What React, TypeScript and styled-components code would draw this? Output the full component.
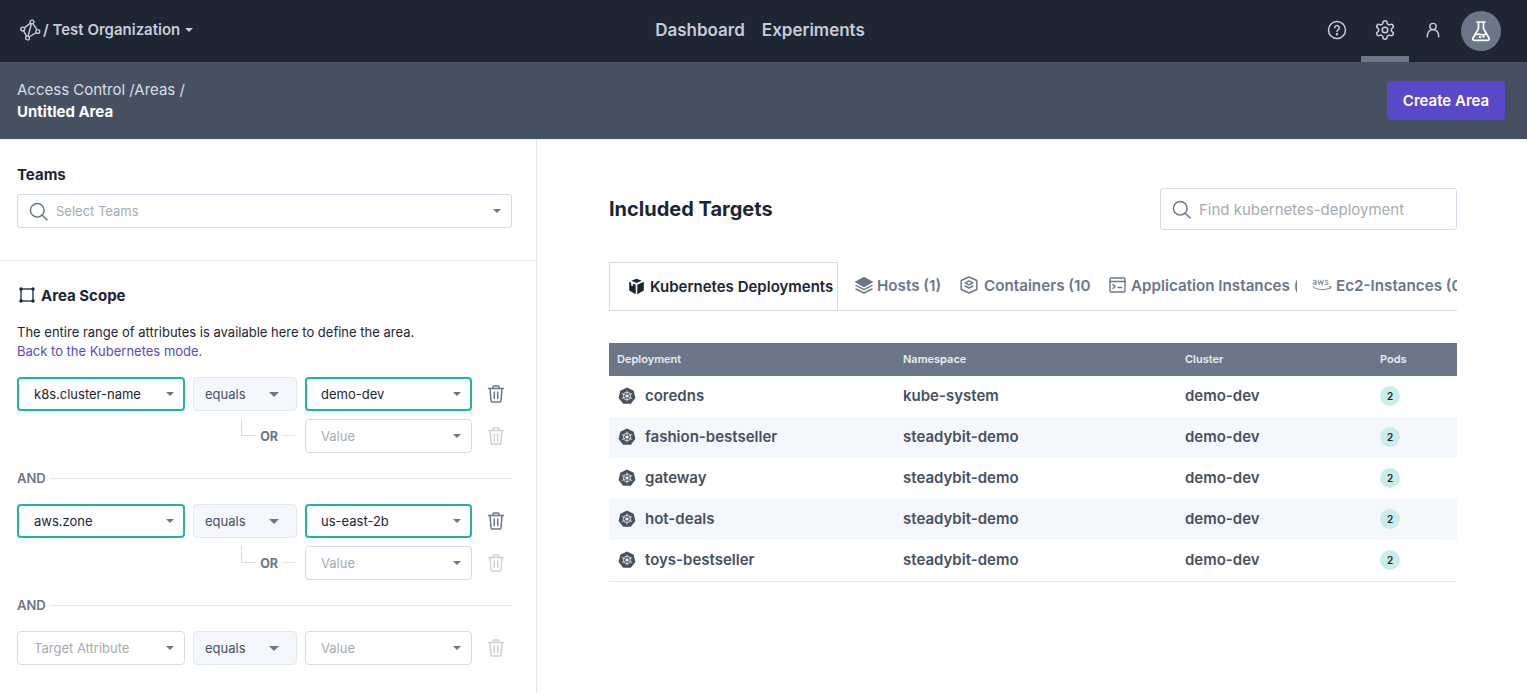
import React from "react";
import styled, { createGlobalStyle } from "styled-components";

const Global = createGlobalStyle`
  html, body { margin: 0; padding: 0; background: #fff; }
  body { font-family: Inter, "Liberation Sans", sans-serif; color: #1c2533; overflow: hidden; }
  * { box-sizing: border-box; }
`;

const Page = styled.div`
  width: 1527px;
  height: 693px;
  display: flex;
  flex-direction: column;
  overflow: hidden;
`;

const TopBar = styled.header`
  height: 62px;
  background: #1e2533;
  display: grid;
  grid-template-columns: 1fr auto 1fr;
  align-items: stretch;
  padding: 0 26px 0 19px;
`;

const Org = styled.div`
  display: flex;
  align-items: center;
  gap: 2px;
  color: #c4cdd9;
  font-size: 15px;
  font-weight: 600;
  padding-bottom: 3px;
`;

const Caret = styled.span<{ $color?: string; $w?: number }>`
  display: inline-block;
  width: 0;
  height: 0;
  border-left: ${(p) => p.$w ?? 4}px solid transparent;
  border-right: ${(p) => p.$w ?? 4}px solid transparent;
  border-top: ${(p) => (p.$w ?? 4) + 0.5}px solid ${(p) => p.$color ?? "#6b7789"};
  flex: none;
`;

const OrgCaret = styled(Caret)`
  margin-left: 3px;
`;

const Nav = styled.nav`
  display: flex;
  align-items: center;
  gap: 17px;
  padding-bottom: 2px;
`;

const NavLink = styled.a`
  color: #c4cdd9;
  font-size: 17px;
  font-weight: 600;
`;

const Tools = styled.div`
  display: flex;
  justify-content: flex-end;
  align-items: stretch;
`;

const ToolButton = styled.div<{ $active?: boolean }>`
  width: 48px;
  display: flex;
  align-items: center;
  justify-content: center;
  color: #c4cdd9;
  border-bottom: 6px solid ${(p) => (p.$active ? "#6b7789" : "transparent")};
  padding-top: 4px;
`;

const Avatar = styled.div`
  width: 40px;
  height: 40px;
  border-radius: 50%;
  background: #6b7789;
  display: flex;
  align-items: center;
  justify-content: center;
  align-self: center;
  margin-left: 4px;
  color: #fff;
`;

const SubBar = styled.div`
  height: 77px;
  background: #455160;
  display: flex;
  align-items: center;
  justify-content: space-between;
  padding: 0 22px 0 17px;
  box-shadow: 0 1px 2px rgba(30, 40, 60, 0.12);
  position: relative;
`;

const Crumbs = styled.div`
  color: #d7dee8;
  font-size: 15px;
  line-height: 22px;
  padding-top: 1px;
`;

const CrumbTitle = styled.div`
  color: #fff;
  font-weight: 700;
`;

const PrimaryButton = styled.button`
  height: 39px;
  width: 118px;
  border: none;
  border-radius: 4px;
  background: #5b48c9;
  color: #fff;
  font: 600 15px Inter, sans-serif;
  padding: 0;
`;

const Body = styled.main`
  flex: 1;
  display: flex;
  min-height: 0;
`;

const Side = styled.aside`
  width: 537px;
  flex: none;
  border-right: 1px solid #e4e9f1;
`;

const TeamsSection = styled.section`
  height: 122px;
  padding: 27px 24px 0 17px;
  border-bottom: 1px solid #e4e9f1;
`;

const Label = styled.div`
  font-size: 15px;
  font-weight: 700;
  line-height: 17px;
  color: #1c2533;
`;

const SearchBox = styled.div<{ $h: number; $fs: number; $gap: number; $pl: number }>`
  height: ${(p) => p.$h}px;
  border: 1px solid #d3dce9;
  border-radius: 3px;
  display: flex;
  align-items: center;
  gap: ${(p) => p.$gap}px;
  padding: 0 10px 0 ${(p) => p.$pl}px;
  font-size: ${(p) => p.$fs}px;
  color: #a6abb3;
  background: #fff;
`;

const TeamsBox = styled(SearchBox)`
  margin-top: 11px;
`;

const Grow = styled.span`
  flex: 1;
`;

const ScopeSection = styled.section`
  padding: 25px 24px 0 17px;
`;

const ScopeTitle = styled.div`
  display: flex;
  align-items: center;
  gap: 6px;
  font-size: 15px;
  font-weight: 700;
  height: 18px;
  padding-left: 2px;
`;

const Help = styled.p`
  margin: 19px 0 0;
  font-size: 13px;
  line-height: 19px;
  color: #1c2533;
`;

const HelpLink = styled.a`
  color: #5b48c9;
  display: block;
`;

const Rule = styled.div`
  margin-top: 16px;
  display: flex;
  flex-direction: column;
  gap: 8px;
`;

const Row = styled.div`
  display: grid;
  grid-template-columns: 168px 112px 175px 32px;
  align-items: center;
  height: 34px;
`;

const SelectBox = styled.div<{ $tone?: "active" | "empty" | "op" }>`
  height: 34px;
  border-radius: 4px;
  display: flex;
  align-items: center;
  justify-content: space-between;
  font-size: 13px;
  background: ${(p) => (p.$tone === "op" ? "#f4f7fb" : "#fff")};
  color: ${(p) => (p.$tone === "active" ? "#1c2533" : p.$tone === "op" ? "#46505f" : "#a6abb3")};
  border: ${(p) => (p.$tone === "active" ? "2px solid #1eb5a8" : p.$tone === "op" ? "1px solid #e2e8f1" : "1px solid #d3dce9")};
  padding: 0 ${(p) => (p.$tone === "active" ? 9 : 10)}px 0 ${(p) => (p.$tone === "active" ? 15 : 16)}px;
`;

const OpBox = styled(SelectBox)`
  width: 104px;
  padding: 0 17px 0 11px;
`;

const MidCell = styled.div`
  margin-left: 8px;
`;

const ValueCell = styled.div`
  margin-left: 8px;
  text-indent: -1px;
`;

const IconCell = styled.div<{ $muted?: boolean }>`
  display: flex;
  justify-content: flex-end;
  margin-right: -1px;
  color: ${(p) => (p.$muted ? "#cdd2d9" : "#6b7789")};
`;

const Connector = styled.div`
  grid-column: 1 / span 2;
  height: 34px;
  display: flex;
  justify-content: flex-end;
  align-items: flex-start;
`;

const Elbow = styled.span`
  width: 14px;
  height: 17px;
  border-left: 1px solid #d3dce9;
  border-bottom: 1px solid #d3dce9;
`;

const OrText = styled.span`
  font-size: 12.5px;
  font-weight: 700;
  color: #6b7789;
  line-height: 36px;
  margin: 0 4px 0 5px;
`;

const Tail = styled.span`
  width: 15px;
  height: 17px;
  border-bottom: 1px solid #e4e9f1;
`;

const AndRow = styled.div`
  margin: 16px 0 17px;
  display: flex;
  align-items: center;
  gap: 4px;
  height: 18px;
  font-size: 13px;
  font-weight: 600;
  color: #6b7789;
`;

const AndLine = styled.span`
  flex: 1;
  height: 1px;
  background: #e4e9f1;
`;

const Content = styled.section`
  flex: 1;
  min-width: 0;
  padding: 49px 70px 0 72px;
`;

const ContentHead = styled.div`
  display: flex;
  justify-content: space-between;
  align-items: center;
  height: 42px;
`;

const Title = styled.h2`
  margin: 0;
  font-size: 20px;
  font-weight: 700;
  color: #1c2533;
`;

const FindBox = styled(SearchBox)`
  width: 297px;
`;

const Tabs = styled.div`
  margin-top: 32px;
  height: 49px;
  display: flex;
  align-items: stretch;
  border-bottom: 1px solid #d3dce9;
  overflow: hidden;
`;

const ActiveTab = styled.div`
  width: 229px;
  height: 49px;
  flex: none;
  border: 1px solid #d3dce9;
  border-bottom: none;
  display: flex;
  align-items: center;
  padding: 0 0 2px 18px;
  gap: 5px;
  font-size: 15px;
  font-weight: 600;
  color: #1c2533;
  background: #fff;
  white-space: nowrap;
`;

const Tab = styled.div<{ $w: number; $ml: number }>`
  width: ${(p) => p.$w}px;
  margin-left: ${(p) => p.$ml}px;
  flex: none;
  display: flex;
  align-items: center;
  gap: 4px;
  font-size: 15.2px;
  font-weight: 600;
  color: #6b7789;
  white-space: nowrap;
  overflow: hidden;
  padding-bottom: 2px;

  svg {
    flex: none;
  }
`;

const Table = styled.div`
  margin-top: 32px;
  border-bottom: 1px solid #e4e9f1;
`;

const Cols = styled.div`
  display: grid;
  grid-template-columns: 286px 282px 195px 85px;
  align-items: center;
`;

const HeadRow = styled(Cols)`
  height: 33px;
  background: #6b7789;
  color: #e8ecf2;
  font-size: 11px;
  font-weight: 600;
  padding-bottom: 2px;
`;

const HeadCell = styled.div`
  padding-left: 8px;
`;

const BodyRow = styled(Cols)<{ $alt: boolean }>`
  height: 41px;
  background: ${(p) => (p.$alt ? "#f4f7fb" : "#fff")};
  font-size: 15px;
  font-weight: 600;
  color: #46505f;
  padding-bottom: 2px;
`;

const NameCell = styled.div`
  padding-left: 9px;
  display: flex;
  align-items: center;
  gap: 9px;
`;

const PodBadge = styled.span`
  margin-left: 8px;
  width: 20px;
  height: 20px;
  border-radius: 50%;
  background: #c9eeea;
  color: #1c2533;
  font-size: 10px;
  font-weight: 600;
  display: flex;
  align-items: center;
  justify-content: center;
`;

const Logo = () => (
  <svg width="22" height="22" viewBox="0 0 22 22" fill="none" stroke="#c4cdd9" strokeWidth="1.4">
    <circle cx="13" cy="3" r="1.9" />
    <circle cx="3.7" cy="10" r="1.9" />
    <circle cx="18.8" cy="12.5" r="1.9" />
    <circle cx="8.5" cy="19" r="1.9" />
    <path d="M11.5 4.1 5.2 8.9M14 4.6l4 6.2M17.2 13.5l-7 4.5M4.5 11.7l3.1 5.6M12.4 4.8 9.1 17.2" />
  </svg>
);

const HelpIcon = () => (
  <svg width="20" height="20" viewBox="0 0 20 20" fill="none" stroke="currentColor" strokeWidth="1.5" strokeLinecap="round">
    <circle cx="10" cy="10" r="8.5" />
    <path d="M7.7 7.8a2.3 2.3 0 1 1 3.5 2c-.8.5-1.2 1-1.2 1.8" />
    <circle cx="10" cy="14.3" r=".5" fill="currentColor" />
  </svg>
);

const GearIcon = () => (
  <svg width="22" height="22" viewBox="0 0 24 24" fill="none" stroke="currentColor" strokeWidth="1.7" strokeLinecap="round" strokeLinejoin="round">
    <path d="M12.22 2h-.44a2 2 0 0 0-2 2v.18a2 2 0 0 1-1 1.73l-.43.25a2 2 0 0 1-2 0l-.15-.08a2 2 0 0 0-2.73.73l-.22.38a2 2 0 0 0 .73 2.73l.15.1a2 2 0 0 1 1 1.72v.51a2 2 0 0 1-1 1.74l-.15.09a2 2 0 0 0-.73 2.73l.22.38a2 2 0 0 0 2.73.73l.15-.08a2 2 0 0 1 2 0l.43.25a2 2 0 0 1 1 1.73V20a2 2 0 0 0 2 2h.44a2 2 0 0 0 2-2v-.18a2 2 0 0 1 1-1.73l.43-.25a2 2 0 0 1 2 0l.15.08a2 2 0 0 0 2.73-.73l.22-.39a2 2 0 0 0-.73-2.73l-.15-.08a2 2 0 0 1-1-1.74v-.5a2 2 0 0 1 1-1.74l.15-.09a2 2 0 0 0 .73-2.73l-.22-.38a2 2 0 0 0-2.73-.73l-.15.08a2 2 0 0 1-2 0l-.43-.25a2 2 0 0 1-1-1.73V4a2 2 0 0 0-2-2z" />
    <circle cx="12" cy="12" r="3" />
  </svg>
);

const UserIcon = () => (
  <svg width="14" height="16" viewBox="0 0 16 18" fill="none" stroke="currentColor" strokeWidth="1.6" strokeLinecap="round">
    <circle cx="8" cy="5" r="3.6" />
    <path d="M1.5 17c0-5.5 2.6-8.4 6.5-8.4s6.5 2.9 6.5 8.4" />
  </svg>
);

const FlaskIcon = () => (
  <svg width="24" height="24" viewBox="0 0 24 24" fill="none" stroke="currentColor" strokeWidth="1.7" strokeLinecap="round" strokeLinejoin="round">
    <path d="M8 3h8M9.5 3v6.6L4 19a1.6 1.6 0 0 0 1.4 2.4h13.2A1.6 1.6 0 0 0 20 19l-5.5-9.4V3" />
    <path d="M7 15.5c2-1 3-.4 5 0s3.5.4 5-.4" />
    <circle cx="11" cy="18" r=".5" />
    <circle cx="14.5" cy="17.5" r=".5" />
  </svg>
);

const SearchIcon = ({ size }: { size: number }) => (
  <svg width={size} height={size} viewBox="0 0 20 20" fill="none" stroke="#64748a" strokeWidth="1.5" strokeLinecap="round">
    <circle cx="8.7" cy="8.7" r="7.2" />
    <path d="M14 14l5 5" />
  </svg>
);

const ScopeIcon = () => (
  <svg width="16" height="16" viewBox="0 0 16 16" fill="none" stroke="#1c2533" strokeWidth="1.3">
    <rect x="2" y="2" width="12" height="12" />
    <g fill="#1c2533" stroke="none">
      <circle cx="2" cy="2" r="1.7" />
      <circle cx="14" cy="2" r="1.7" />
      <circle cx="2" cy="14" r="1.7" />
      <circle cx="14" cy="14" r="1.7" />
    </g>
  </svg>
);

const TrashIcon = () => (
  <svg width="18" height="18" viewBox="0 0 18 18" fill="none" stroke="currentColor" strokeWidth="1.5" strokeLinecap="round" strokeLinejoin="round">
    <path d="M1.5 3.5h15M6 3.5V2a1 1 0 0 1 1-1h4a1 1 0 0 1 1 1v1.5M3 3.5l1 12.5a1.2 1.2 0 0 0 1.2 1h7.6a1.2 1.2 0 0 0 1.2-1l1-12.5M7.3 7v6.5M10.7 7v6.5" />
  </svg>
);

const CubeIcon = () => (
  <svg width="17" height="17" viewBox="0 0 17 17" fill="#1c2533">
    <path d="M8.5 .8 3.2 2.8l5.3 2.1 5.3-2.1z" />
    <path d="M1.2 3.8v8.7l6.500 3.8V6.7l-2.800-1.100v2.500L3.200 7.400V4.700z" />
    <path d="M15.8 3.8v8.7l-6.5 3.8V6.7z" />
  </svg>
);

const LayersIcon = () => (
  <svg width="18" height="18" viewBox="0 0 18 18" fill="none" stroke="#6b7789" strokeWidth="1.4" strokeLinejoin="round" strokeLinecap="round">
    <path d="M9 1.5 17.3 6 9 10.5.7 6z" fill="#6b7789" />
    <path d="M1 9.5l8 4.2 8-4.2M1 13l8 4 8-4" />
  </svg>
);

const BoxIcon = () => (
  <svg width="20" height="18" viewBox="0 0 20 18" fill="none" stroke="#6b7789" strokeWidth="1.5" strokeLinejoin="round" strokeLinecap="round">
    <path d="M9 1l7.8 3.5v9L9 17l-7.800-3.500v-9z" />
    <path d="M5.200 6.800 9 4.800l3.800 2L9 8.800zM5.200 10 9 12l3.800-2" />
  </svg>
);

const TermIcon = () => (
  <svg width="18" height="16" viewBox="0 0 18 16" fill="none" stroke="#6b7789" strokeWidth="1.4" strokeLinecap="round" strokeLinejoin="round">
    <rect x="1" y="1" width="15" height="14" rx="1" />
    <path d="M1 4.500h15M4 7.500l2.200 2L4 11.500M9 10.500h3.500" />
  </svg>
);

const AwsIcon = () => (
  <svg width="20" height="14" viewBox="0 0 20 14" fill="none" stroke="#6b7789" strokeWidth="0.9" strokeLinecap="round" strokeLinejoin="round">
    <path d="M1.500 2.500c1-.6 2.500-.4 2.500.8V6.600M4 4.300C2 4 1 4.600 1 5.500s1.800 1.300 3 .2" />
    <path d="M6 2.200l1.300 4.400 1.400-4 1.400 4 1.300-4.400" />
    <path d="M16 2.700c-1-.7-2.700-.6-2.700.5s2.900.9 2.900 2.200-2 1.400-3 .7" />
    <path d="M1 9c5 3.400 12.500 3.400 17.500.7M17.500 8.500l1.500.2-.6 1.800" />
  </svg>
);

const K8sIcon = () => (
  <svg width="18" height="18" viewBox="0 0 18 18">
    <path d="M9 .5l6.700 3.200 1.700 7.200-4.600 5.800H5.200L.6 10.900l1.700-7.200z" fill="#46505f" />
    <g stroke="#fff" strokeWidth="0.7" fill="none">
      <circle cx="9" cy="9" r="3.8" />
      <path d="M9 3.500v11M3.800 6.300l10.400 5.400M14.200 6.300 3.800 11.700" />
    </g>
    <circle cx="9" cy="9" r="1" fill="#fff" />
  </svg>
);

const rows = [
  ["coredns", "kube-system"],
  ["fashion-bestseller", "steadybit-demo"],
  ["gateway", "steadybit-demo"],
  ["hot-deals", "steadybit-demo"],
  ["toys-bestseller", "steadybit-demo"],
];

const Select = ({ text, tone }: { text: string; tone?: "active" | "empty" }) => (
  <SelectBox $tone={tone}>
    <span>{text}</span>
    <Caret />
  </SelectBox>
);

const RuleRows = ({
  attr,
  value,
  orValue,
}: {
  attr?: string;
  value?: string;
  orValue?: boolean;
}) => (
  <Rule>
    <Row>
      <Select text={attr ?? "Target Attribute"} tone={attr ? "active" : "empty"} />
      <MidCell>
        <OpBox $tone="op">
          <span>equals</span>
          <Caret $w={5} />
        </OpBox>
      </MidCell>
      <ValueCell>
        <Select text={value ?? "Value"} tone={value ? "active" : "empty"} />
      </ValueCell>
      <IconCell $muted={!value}>
        <TrashIcon />
      </IconCell>
    </Row>
    {orValue && (
      <Row>
        <Connector>
          <Elbow />
          <OrText>OR</OrText>
          <Tail />
        </Connector>
        <ValueCell>
          <Select text="Value" tone="empty" />
        </ValueCell>
        <IconCell $muted>
          <TrashIcon />
        </IconCell>
      </Row>
    )}
  </Rule>
);

const And = () => (
  <AndRow>
    AND
    <AndLine />
  </AndRow>
);

export default function App() {
  return (
    <Page>
      <Global />
      <TopBar>
        <Org>
          <Logo />
          <span>/ Test Organization</span>
          <OrgCaret $color="#c4cdd9" />
        </Org>
        <Nav>
          <NavLink>Dashboard</NavLink>
          <NavLink>Experiments</NavLink>
        </Nav>
        <Tools>
          <ToolButton>
            <HelpIcon />
          </ToolButton>
          <ToolButton $active>
            <GearIcon />
          </ToolButton>
          <ToolButton>
            <UserIcon />
          </ToolButton>
          <Avatar>
            <FlaskIcon />
          </Avatar>
        </Tools>
      </TopBar>
      <SubBar>
        <Crumbs>
          <div>Access Control /Areas /</div>
          <CrumbTitle>Untitled Area</CrumbTitle>
        </Crumbs>
        <PrimaryButton>Create Area</PrimaryButton>
      </SubBar>
      <Body>
        <Side>
          <TeamsSection>
            <Label>Teams</Label>
            <TeamsBox $h={34} $fs={13} $gap={8} $pl={11}>
              <SearchIcon size={19} />
              <Grow>Select Teams</Grow>
              <Caret />
            </TeamsBox>
          </TeamsSection>
          <ScopeSection>
            <ScopeTitle>
              <ScopeIcon />
              Area Scope
            </ScopeTitle>
            <Help>
              The entire range of attributes is available here to define the area.
              <HelpLink>Back to the Kubernetes mode.</HelpLink>
            </Help>
            <RuleRows attr="k8s.cluster-name" value="demo-dev" orValue />
            <And />
            <RuleRows attr="aws.zone" value="us-east-2b" orValue />
            <And />
            <RuleRows />
          </ScopeSection>
        </Side>
        <Content>
          <ContentHead>
            <Title>Included Targets</Title>
            <FindBox $h={42} $fs={15} $gap={8} $pl={11}>
              <SearchIcon size={19} />
              <Grow>Find kubernetes-deployment</Grow>
            </FindBox>
          </ContentHead>
          <Tabs>
            <ActiveTab>
              <CubeIcon />
              Kubernetes Deployments
            </ActiveTab>
            <Tab $w={88} $ml={17}>
              <LayersIcon />
              Hosts (1)
            </Tab>
            <Tab $w={132} $ml={17}>
              <BoxIcon />
              Containers (10
            </Tab>
            <Tab $w={188} $ml={17}>
              <TermIcon />
              Application Instances (
            </Tab>
            <Tab $w={145} $ml={15}>
              <AwsIcon />
              Ec2-Instances (0
            </Tab>
          </Tabs>
          <Table>
            <HeadRow>
              <HeadCell>Deployment</HeadCell>
              <HeadCell>Namespace</HeadCell>
              <HeadCell>Cluster</HeadCell>
              <HeadCell>Pods</HeadCell>
            </HeadRow>
            {rows.map(([name, ns], i) => (
              <BodyRow key={name} $alt={i % 2 === 1}>
                <NameCell>
                  <K8sIcon />
                  {name}
                </NameCell>
                <HeadCell>{ns}</HeadCell>
                <HeadCell>demo-dev</HeadCell>
                <div>
                  <PodBadge>2</PodBadge>
                </div>
              </BodyRow>
            ))}
          </Table>
        </Content>
      </Body>
    </Page>
  );
}
